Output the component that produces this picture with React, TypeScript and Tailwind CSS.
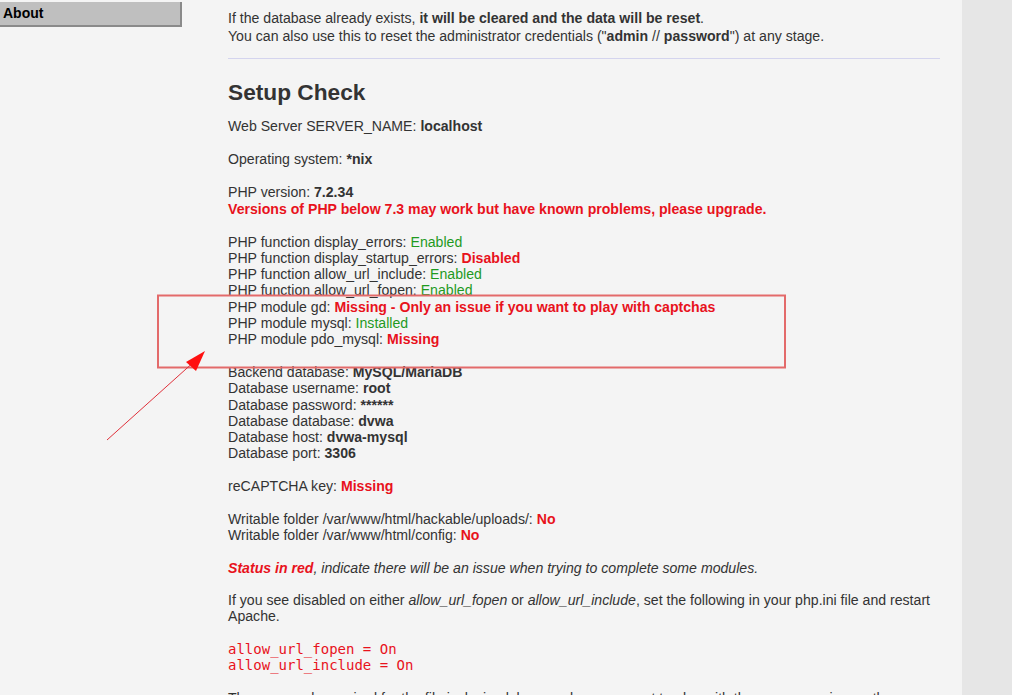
import React from "react";

const R = ({ children }: { children: React.ReactNode }) => (
  <span className="font-bold text-[#e8121c]">{children}</span>
);
const G = ({ children }: { children: React.ReactNode }) => (
  <span className="text-[#1f9a1f]">{children}</span>
);
const B = ({ children }: { children: React.ReactNode }) => (
  <span className="font-bold">{children}</span>
);
const Blank = () => <div className="h-[16.3px]" />;

export default function App() {
  return (
    <div
      className="relative flex h-[695px] w-[1012px] overflow-hidden bg-[#f4f4f4] text-[#333]"
      style={{ fontFamily: '"Liberation Sans", Arial, sans-serif' }}
    >
      {/* sidebar */}
      <div className="w-[182px] shrink-0 pt-[2px]">
        <div className="h-[25px] border-b-2 border-r-2 border-[#8a8a8a] bg-[#bfbfbf] pl-[3px] text-[14px] font-bold leading-[22px] text-black">
          About
        </div>
      </div>

      {/* main */}
      <div className="w-[780px] shrink-0 pl-[46px] pr-[22px] pt-[9px] text-[14.12px]">
        <div className="leading-[18px]">
          <div>
            If the database already exists, <B>it will be cleared and the data will be reset</B>.
          </div>
          <div>
            You can also use this to reset the administrator credentials ("<B>admin</B> // <B>password</B>") at any stage.
          </div>
        </div>
        <div className="mt-[13px] h-px bg-[#d4d4ee]" />
        <h2 className="mt-[20px] text-[22.7px] font-bold leading-[26px]">Setup Check</h2>

        <div className="mt-[13px] leading-[16.3px]">
          <div>
            Web Server SERVER_NAME: <B>localhost</B>
          </div>
          <Blank />
          <div className="mt-[0.5px]">
            Operating system: <B>*nix</B>
          </div>
          <Blank />
          <div>
            PHP version: <B>7.2.34</B>
          </div>
          <div className="mt-[1px]">
            <R>Versions of PHP below 7.3 may work but have known problems, please upgrade.</R>
          </div>
          <Blank />
          <div>
            PHP function display_errors: <G>Enabled</G>
          </div>
          <div>
            PHP function display_startup_errors: <R>Disabled</R>
          </div>
          <div>
            PHP function allow_url_include: <G>Enabled</G>
          </div>
          <div>
            PHP function allow_url_fopen: <G>Enabled</G>
          </div>
          <div>
            PHP module gd: <R>Missing - Only an issue if you want to play with captchas</R>
          </div>
          <div>
            PHP module mysql: <G>Installed</G>
          </div>
          <div>
            PHP module pdo_mysql: <R>Missing</R>
          </div>
          <Blank />
          <div>
            Backend database: <B>MySQL/MariaDB</B>
          </div>
          <div>
            Database username: <B>root</B>
          </div>
          <div>
            Database password: <B>******</B>
          </div>
          <div>
            Database database: <B>dvwa</B>
          </div>
          <div>
            Database host: <B>dvwa-mysql</B>
          </div>
          <div>
            Database port: <B>3306</B>
          </div>
          <Blank />
          <div>
            reCAPTCHA key: <R>Missing</R>
          </div>
          <Blank />
          <div>
            Writable folder /var/www/html/hackable/uploads/: <R>No</R>
          </div>
          <div>
            Writable folder /var/www/html/config: <R>No</R>
          </div>
          <Blank />
          <div className="italic">
            <R>Status in red</R>, indicate there will be an issue when trying to complete some modules.
          </div>
          <Blank />
          <div>
            If you see disabled on either <i>allow_url_fopen</i> or <i>allow_url_include</i>, set the following in your php.ini file and restart Apache.
          </div>
          <Blank />
          <div
            className="text-[14px] text-[#e8121c]"
            style={{ fontFamily: '"DejaVu Sans Mono", "Liberation Mono", monospace' }}
          >
            <div>allow_url_fopen = On</div>
            <div>allow_url_include = On</div>
          </div>
          <Blank />
          <div className="whitespace-nowrap">
            These are only required for the file inclusion labs so unless you want to play with those, you can ignore them.
          </div>
        </div>
      </div>

      {/* right column */}
      <div className="flex-1 bg-[#e6e6e6]" />

      {/* annotation overlay */}
      <svg className="pointer-events-none absolute left-0 top-0" width="1012" height="695">
        <rect x="158" y="295.5" width="627" height="72" fill="none" stroke="#e36a6a" strokeWidth="2" />
        <line x1="107" y1="440" x2="196" y2="360" stroke="#e0303a" strokeWidth="1" />
        <polygon points="205,351 186,362 196,371" fill="#ff1010" />
      </svg>
    </div>
  );
}
